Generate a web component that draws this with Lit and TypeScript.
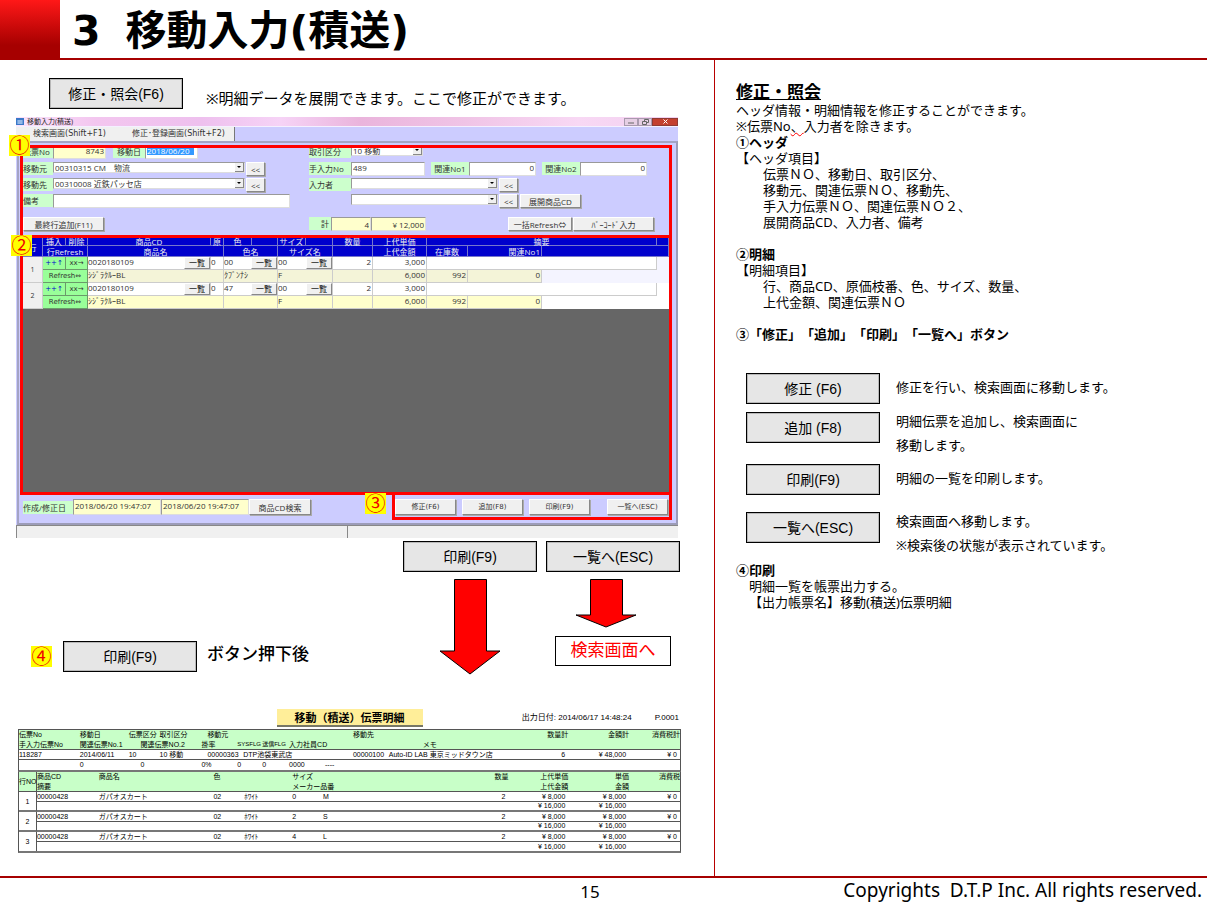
import { LitElement, html, css, nothing } from "lit";
import { customElement, property } from "lit/decorators.js";

type Cell = [start: number, end: number, text: string, align?: string];
interface ReportRow {
  cells: Cell[];
  kind?: string;
}

/** Column edges of the slip header block, in report units. */
const SLIP_EDGES = [18, 79, 128, 140, 159, 201, 207, 237, 243, 262, 289, 325, 353, 389, 423, 500, 569, 630, 681];
const SLIP_ROWS: ReportRow[] = [
  {
    kind: "green",
    cells: [[0, 1, "伝票No"], [1, 2, "移動日"], [2, 4, "伝票区分"], [4, 6, "取引区分"], [6, 9, "移動元"], [12, 14, "移動先"], [15, 16, "数量計", "right"], [16, 17, "金額計", "right"], [17, 18, "消費税計", "right"]],
  },
  {
    kind: "green end",
    cells: [[0, 1, "手入力伝票No"], [1, 3, "関連伝票No.1"], [3, 5, "関連伝票NO.2"], [5, 7, "掛率"], [7, 9, "SYSFLG", "flag"], [9, 10, "送信FLG", "flag"], [10, 12, "入力社員CD"], [14, 15, "メモ"]],
  },
  {
    kind: "end",
    cells: [[0, 1, "118287"], [1, 2, "2014/06/11"], [2, 4, "10"], [4, 6, "10 移動"], [6, 8, "00000363"], [8, 12, "DTP池袋東武店"], [12, 13, "00000100"], [13, 15, "Auto-ID LAB 東京ミッドタウン店"], [15, 16, "6", "num"], [16, 17, "¥ 48,000", "num"], [17, 18, "¥ 0", "num"]],
  },
  {
    cells: [[1, 3, "0"], [3, 5, "0"], [5, 7, "0%"], [7, 9, "0"], [9, 10, "0"], [10, 11, "0000"], [11, 12, "----"]],
  },
];

const ITEM_EDGES = [18, 36, 98, 213, 244, 292, 323, 440, 509, 569, 630, 681];
const ITEMS = [
  { no: "1", size: "0", label: "M" },
  { no: "2", size: "2", label: "S" },
  { no: "3", size: "4", label: "L" },
];

@customElement("report-table")
class ReportTable extends LitElement {
  @property({ attribute: false }) edges: number[] = [];
  @property({ attribute: false }) rows: ReportRow[] = [];

  static styles = css`
    :host { display: block; }
    table { width: 100%; table-layout: fixed; border-collapse: separate; border-spacing: 0; border: 1px solid #555; border-top: 0; border-bottom: 2px solid #777; }
    td { height: 9px; padding: 0; line-height: 9px; white-space: nowrap; overflow: visible; border-bottom: 1px solid transparent; }
    .green td { background: #c8ffc8; }
    .end td { border-bottom-color: #555; }
    .right { text-align: right; }
    .num { text-align: right; padding-right: 3px; }
    .flag { font-size: 6px; }
    .group { text-align: center; border-right: 1px solid #555; border-bottom-color: #555; }
    .double td { border-bottom: 2px solid #777; height: 8px; line-height: 8px; }
    .group.thick { border-bottom: 2px solid #777; }
    .last td, .group.final { border-bottom: 0; }
  `;

  private row(row: ReportRow) {
    const out: unknown[] = [];
    let at = row.kind?.includes("under") ? 1 : 0;
    for (const [start, end, text, align] of row.cells) {
      if (start > at) out.push(html`<td colspan=${start - at}></td>`);
      out.push(
        align?.startsWith("group")
          ? html`<td class=${align} rowspan="2">${text}</td>`
          : html`<td class=${align ?? ""} colspan=${end - start}>${text}</td>`
      );
      at = end;
    }
    const last = this.edges.length - 1;
    if (at < last) out.push(html`<td colspan=${last - at}></td>`);
    return html`<tr class=${row.kind ?? ""}>${out}</tr>`;
  }

  render() {
    const e = this.edges;
    const total = e[e.length - 1] - e[0];
    return html`<table>
      <colgroup>
        ${e.slice(1).map((x, i) => html`<col style="width:${((x - e[i]) / total) * 100}%" />`)}
      </colgroup>
      <tbody>${this.rows.map((r) => this.row(r))}</tbody>
    </table>`;
  }
}

const ITEM_ROWS: ReportRow[] = [
  {
    kind: "green",
    cells: [[0, 1, "行NO", "group"], [1, 2, "商品CD"], [2, 3, "商品名"], [3, 4, "色"], [5, 7, "サイズ"], [7, 8, "数量", "right"], [8, 9, "上代単価", "right"], [9, 10, "単価", "right"], [10, 11, "消費税", "right"]],
  },
  {
    kind: "green end under",
    cells: [[1, 2, "摘要"], [5, 7, "メーカー品番"], [8, 9, "上代金額", "right"], [9, 10, "金額", "right"]],
  },
  ...ITEMS.flatMap((it, i): ReportRow[] => {
    const last = i === ITEMS.length - 1;
    return [
      {
        kind: "end",
        cells: [[0, 1, it.no, last ? "group final" : "group thick"], [1, 2, "00000428"], [2, 3, "ガパオスカート"], [3, 4, "02"], [4, 5, "ﾎﾜｲﾄ"], [5, 6, it.size], [6, 7, it.label], [7, 8, "2", "num"], [8, 9, "¥ 8,000", "num"], [9, 10, "¥ 8,000", "num"], [10, 11, "¥ 0", "num"]],
      },
      {
        kind: last ? "under last" : "under double",
        cells: [[8, 9, "¥ 16,000", "num"], [9, 10, "¥ 16,000", "num"]],
      },
    ];
  }),
];

@customElement("entry-window")
class EntryWindow extends LitElement {
  static styles = css`
    :host { display: block; position: relative; font: 8px/10px "Open Sans", "Noto Sans CJK JP", sans-serif; color: #333; }
    button, input, select { font: inherit; color: inherit; box-sizing: border-box; margin: 0; padding: 0; border-radius: 0; appearance: none; min-width: 0; }
    .titlebar { display: flex; align-items: center; height: 9px; font-size: 7px; color: #222; background: linear-gradient(90deg, #fbe3fb, #f3c6ef 12%, #eec0ee 28%, #f6d3f6 40%, #eab4dc 52%, #f0c4e6 68%, #f8d8f4 85%, #f2d0f0); border-bottom: 1px solid #f4f0ff; }
    .app-icon { width: 8px; height: 7px; margin-right: 3px; }
    .caption { flex: 1; }
    .controls { display: flex; }
    .controls button { width: 14px; height: 8px; border: 1px solid #a99aae; background: #e6cfe4; display: flex; align-items: center; justify-content: center; }
    .controls .close { width: 26px; background: #c4402f; border-color: #8f3a34; color: #fff; }
    .body { background: #ccccff; }
    .tabs { display: flex; height: 14px; font-family: "DejaVu Sans", "Noto Sans CJK JP", sans-serif; }
    .tab { height: 14px; border: 0; background: #f0f0f0; width: 107px; }
    .tab.current { width: 112px; border-right: 1px solid #777; }
    .panel { margin: 0 0 0 1px; border: 2px solid #9c9cb8; border-color: #a4a4c4 #9c9cb8 #9c9cb8 #a4a4c4; padding: 2px 4px 3px 1px; }
    .frame { border: 3px solid #f00; }

    .head { height: 87px; overflow: hidden; display: grid; grid-template-columns: minmax(0, 286fr) minmax(0, 360fr); }
    .line { display: flex; align-items: flex-start; height: 16px; }
    .line.first { height: 17px; margin-top: -3px; }
    .line.tall { height: 23px; }
    .tag { background: #ccffcc; height: 13px; line-height: 13px; width: 30px; white-space: nowrap; }
    .tag.wide { width: 42px; }
    .tag.blank { background: none; }
    .tag.date { width: 32px; text-align: center; margin-left: 7px; }
    .tag.ref { width: 38px; margin-left: 6px; text-align: center; }
    .tag.sum { width: 22px; text-align: right; padding-right: 2px; box-sizing: border-box; }
    .field { height: 14px; border: 1px solid #999; border-right-color: #ddd; border-bottom-color: #ddd; background: #fff; padding: 0 1px 4px; }
    .field.num { text-align: right; }
    .field.pale { background: #ffffcc; }
    .field.even { padding-bottom: 0; }
    .w53 { width: 53px; } .w40 { width: 40px; } .w55 { width: 55px; } .w68 { width: 67px; } .w74 { width: 74px; } .w88 { width: 88px; }
    .note { width: 237px; }
    .field.marked { background: linear-gradient(#3399ff, #3399ff) 1px 0 / 47px 9px no-repeat #fff; color: #fff; }
    .drop { display: flex; height: 11px; border: 1px solid #999; border-right-color: #ddd; border-bottom-color: #ddd; background: #fff; box-sizing: border-box; }
    .drop select { flex: 1; border: 0; background: transparent; height: 9px; line-height: 9px; padding-left: 1px; }
    .arrow { width: 8px; background: #f0f0f0; display: flex; align-items: center; justify-content: center; border-right: 1px solid #888; border-bottom: 1px solid #888; }
    .arrow::after { content: ""; border: 2px solid transparent; border-top-color: #000; border-bottom: 0; }
    .w72 { width: 72px; } .w147 { width: 147px; } .w192 { width: 192px; }
    .btn { height: 14px; border: 1px solid #fff; border-right-color: #888; border-bottom-color: #888; background: #f0f0f0; white-space: nowrap; box-shadow: 1px 1px 0 #aaa; line-height: 11px; display: flex; justify-content: center; align-items: center; }
    .more { width: 19px; margin-left: 1px; }
    .add { width: 81px; } .cd { width: 61px; margin-left: 2px; } .bulk { width: 64px; } .code { width: 81px; margin: 0 15px 0 1px; }
    .spacer { flex: 1; }

    .detail { border-top: 0; background: #666; height: 254px; }
    table { width: 100%; table-layout: fixed; border-collapse: separate; border-spacing: 0; }
    th, td { padding: 0; height: 12px; line-height: 12px; border-right: 1px solid #ccc; border-bottom: 1px solid #ccc; white-space: nowrap; font-weight: 400; text-align: left; box-sizing: border-box; }
    th { background: #0000cc; color: #eee; border-color: #7777cc; text-align: center; height: 11px; line-height: 9px; }
    th.top { height: 8px; line-height: 7px; }
    td { height: 13px; line-height: 10px; vertical-align: top; background: #fff; }
    .num { text-align: right; padding-right: 1px; }
    .low td { background: #ffffcc; }
    .low.dim td { background: #f4f4d8; }
    .low td.rest, td.rest { background: #fff; border-color: transparent; }
    .low.dim td.rest, td.rest.dim { background: #f4f4ff; }
    td.index, .low td.index { background: #f0f0f0; text-align: center; vertical-align: middle; font-size: 7px; }
    td.op { padding: 0; border-color: #6a9a6a; }
    .op button { width: 100%; height: 12px; border: 0; background: #99ff99; display: block; font: 7px/12px "DejaVu Sans", sans-serif; }
    .op .ins { color: #0000cc; }
    .pick { display: flex; justify-content: space-between; align-items: flex-start; }
    .pick button { width: 26px; height: 12px; border: 1px solid #fff; border-right-color: #888; border-bottom-color: #888; background: #f0f0f0; line-height: 10px; color: #000; }

    .foot { display: flex; height: 25px; }
    .made { flex: 1; display: flex; align-items: flex-start; padding: 4px 0 0 3px; }
    .made .tag { width: 50px; margin-top: 2px; }
    .made .field { height: 16px; }
    .made .btn { width: 62px; height: 16px; }
    .actions { border-top: 0; box-sizing: border-box; width: 280px; height: 25px; display: flex; align-items: flex-start; gap: 6px; padding: 4px 1px 0 0; font-size: 7px; }
    .actions .btn { width: 61px; height: 16px; font-family: "DejaVu Sans", "Noto Sans CJK JP", sans-serif; }
    .actions .btn:last-child { margin-left: auto; }
    .status { height: 13px; box-sizing: border-box; display: grid; grid-template-columns: 331fr 331fr; background: #f0f0f0; border-top: 1px solid #888; }
    .status span { border-left: 1px solid #888; }
    .badge { position: absolute; width: 21px; height: 21px; background: #ff0; color: #e00; font: 20px/20px "Noto Sans CJK JP", sans-serif; text-align: center; }
    .b1 { left: -7px; top: 18px; } .b2 { left: -5px; top: 118px; } .b3 { left: 349px; top: 376px; }
  `;

  private drop(id: string, width: string, value: string, label?: string) {
    return html`<span class="drop ${width}">
      <select id=${id} aria-label=${label ?? nothing}><option>${value}</option></select><span class="arrow"></span>
    </span>`;
  }

  private entry(n: number, color: string, colorName: string, dim: boolean) {
    const tone = dim ? "dim" : "";
    const pick = (v: string) => html`<div class="pick"><span>${v}</span><button>一覧</button></div>`;
    return html`
      <tr>
        <td class="index" rowspan="2">${n}</td>
        <td class="op"><button class="ins" aria-label="挿入">++↑</button></td>
        <td class="op"><button aria-label="削除">xx→</button></td>
        <td>${pick("0020180109")}</td>
        <td>0</td>
        <td colspan="2">${pick(color)}</td>
        <td colspan="2">${pick("00")}</td>
        <td class="num">2</td>
        <td class="num">3,000</td>
        <td colspan="3"></td>
        <td class="rest ${tone}"></td>
      </tr>
      <tr class="low ${tone}">
        <td class="op" colspan="2"><button>Refresh⇔</button></td>
        <td colspan="2">ｼｼﾞﾗｸﾙｰBL</td>
        <td colspan="2">${colorName}</td>
        <td colspan="2">F</td>
        <td></td>
        <td class="num">6,000</td>
        <td class="num">992</td>
        <td class="num">0</td>
        <td class="rest" colspan="2"></td>
      </tr>`;
  }

  render() {
    const cols = [20, 23, 22, 123, 13, 28, 26, 28, 27, 40, 54, 41, 74, 115, 12];
    const top = (t: string, span = 1) => html`<th class="top" colspan=${span}>${t}</th>`;
    return html`
      <div class="titlebar">
        <svg class="app-icon" viewBox="0 0 8 7"><rect width="8" height="7" fill="#3a78c8" /><path d="M1 3h6M1 5h6M3 2v4M5 2v4" stroke="#d6e8ff" stroke-width=".7" /></svg>
        <span class="caption">移動入力(積送)</span>
        <div class="controls">
          <button aria-label="最小化"><svg width="6" height="4"><path d="M0 3h6" stroke="#666" /></svg></button>
          <button aria-label="最大化"><svg width="7" height="6" fill="none" stroke="#666"><path d="M.5 2.500h4v3h-4zM2.500 2V.5h4v3H5" /></svg></button>
          <button class="close" aria-label="閉じる"><svg width="5" height="5" stroke="#fff"><path d="M.5.5l4 4M4.500.5l-4 4" /></svg></button>
        </div>
      </div>
      <div class="body">
        <div class="tabs">
          <button class="tab">検索画面(Shift+F1)</button>
          <button class="tab current">修正･登録画面(Shift+F2)</button>
        </div>
        <div class="panel">
          <section class="frame head">
            <div>
              <div class="line first">
                <label class="tag" for="slip">伝票No</label>
                <input id="slip" class="field pale num w53" value="8743" />
                <label class="tag date" for="day">移動日</label>
                <input id="day" class="field marked w53" value="2018/06/20" />
              </div>
              <div class="line">
                <label class="tag" for="from">移動元</label>${this.drop("from", "w192", "00310315 CM　物流")}
                <button class="btn more">&lt;&lt;</button>
              </div>
              <div class="line">
                <label class="tag" for="to">移動先</label>${this.drop("to", "w192", "00310008 近鉄パッセ店")}
                <button class="btn more">&lt;&lt;</button>
              </div>
              <div class="line tall">
                <label class="tag" for="memo">備考</label><input id="memo" class="field note" />
              </div>
              <div class="line"><button class="btn add">最終行追加(F11)</button></div>
            </div>
            <div>
              <div class="line first">
                <label class="tag wide" for="kind">取引区分</label>${this.drop("kind", "w72", "10 移動")}
              </div>
              <div class="line">
                <label class="tag wide" for="manual">手入力No</label><input id="manual" class="field w74" value="489" />
                <label class="tag ref" for="ref1">関連No1</label><input id="ref1" class="field num w68" value="0" />
                <label class="tag ref" for="ref2">関連No2</label><input id="ref2" class="field num w68" value="0" />
              </div>
              <div class="line">
                <label class="tag wide" for="person">入力者</label>${this.drop("person", "w147", "")}
                <button class="btn more">&lt;&lt;</button>
              </div>
              <div class="line tall">
                <span class="tag wide blank"></span>${this.drop("open", "w147", "", "展開商品CD")}
                <button class="btn more">&lt;&lt;</button><button class="btn cd">展開商品CD</button>
              </div>
              <div class="line">
                <label class="tag sum" for="count">計</label>
                <input id="count" class="field pale num even w40" value="4" />
                <input class="field pale num even w55" aria-label="合計金額" value="¥ 12,000" />
                <span class="spacer"></span>
                <button class="btn bulk">一括Refresh⇔</button><button class="btn code">ﾊﾞｰｺｰﾄﾞ入力</button>
              </div>
            </div>
          </section>
          <section class="frame detail">
            <table>
              <colgroup>${cols.map((w) => html`<col style="width:${(w / 646) * 100}%" />`)}</colgroup>
              <thead>
                <tr>
                  <th rowspan="2">行</th>
                  ${top("挿入")}${top("削除")}${top("商品CD")}${top("原")}${top("色")}${top("")}${top("サイズ")}${top("")}${top("数量")}${top("上代単価")}${top("摘要", 3)}${top("")}
                </tr>
                <tr>
                  <th colspan="2">行Refresh</th>
                  <th colspan="2">商品名</th>
                  <th colspan="2">色名</th>
                  <th colspan="2">サイズ名</th>
                  <th></th>
                  <th>上代金額</th>
                  <th>在庫数</th>
                  <th class="num">関連No1</th>
                  <th colspan="2"></th>
                </tr>
              </thead>
              <tbody>
                ${this.entry(1, "00", "ｸﾌﾞﾝﾅｼ", true)}${this.entry(2, "47", "", false)}
              </tbody>
            </table>
          </section>
          <div class="foot">
            <div class="made">
              <label class="tag" for="made">作成/修正日</label>
              <input id="made" class="field pale w88" value="2018/06/20 19:47:07" />
              <input class="field pale w88" aria-label="修正日" value="2018/06/20 19:47:07" />
              <button class="btn">商品CD検索</button>
            </div>
            <div class="frame actions">
              <button class="btn">修正(F6)</button><button class="btn">追加(F8)</button>
              <button class="btn">印刷(F9)</button><button class="btn">一覧へ(ESC)</button>
            </div>
          </div>
        </div>
      </div>
      <div class="status"><span></span><span></span></div>
      <span class="badge b1">①</span><span class="badge b2">②</span><span class="badge b3">③</span>
    `;
  }
}

@customElement("app-root")
class AppRoot extends LitElement {
  static styles = css`
    :host { display: flex; flex-direction: column; min-height: 100vh; background: #fff; color: #000; font: 13px/16px "Noto Sans", "Noto Sans CJK JP", sans-serif; text-spacing-trim: space-all; }
    header { display: flex; align-items: center; height: 58px; border-bottom: 2px solid #a60000; }
    .block { width: 60px; height: 60px; background: linear-gradient(#ff1818, #a60000 75%); margin-bottom: -2px; align-self: flex-start; }
    h1 { margin: 0 0 0 12px; padding-top: 4px; font: bold 41px/54px "DejaVu Sans", "Noto Sans CJK JP", sans-serif; display: flex; gap: 25px; }
    main { flex: 1; display: grid; grid-template-columns: minmax(0, 714fr) minmax(0, 493fr); }
    .shots { padding: 18px 33px 0 16px; }
    .notes { border-left: 1px solid #b80000; padding: 22px 21px 0; }
    .key { box-sizing: border-box; width: 134px; height: 31px; padding: 0; border: 1px solid #000; outline: 1px solid #0003; outline-offset: -2px; background: #e6e6e6; border-radius: 0; color: #000; font: 14px/16px "Liberation Sans", "Noto Sans CJK JP", sans-serif; flex: none; }
    .intro { display: flex; align-items: center; gap: 23px; margin-left: 33px; height: 31px; font-size: 15px; }
    .intro span { padding-top: 9px; }
    entry-window { margin: 8px 3px 3px 0; }
    .flow { display: grid; grid-template-columns: 1fr 134px 134px; column-gap: 9px; padding-right: 1px; }
    .path { display: flex; flex-direction: column; align-items: center; }
    .path svg { margin-top: 7px; display: block; }
    .path.back svg { margin-right: 14px; }
    .result { margin-top: 8px; border: 1px solid #000; box-sizing: border-box; width: 116px; height: 30px; text-align: center; font-size: 17px; line-height: 26px; color: #f00; }
    .after { display: flex; align-items: center; align-self: end; margin: 0 0 3px 15px; font-size: 17px; }
    .badge { width: 21px; height: 21px; background: #ff0; color: #e00; font: 20px/20px "Noto Sans CJK JP", sans-serif; text-align: center; margin-right: 11px; }
    .after .said { padding: 0 0 5px 10px; font-weight: 500; }
    .report { margin: 34px 0 0 2px; font: 7px/9px "Liberation Sans Narrow", "Liberation Sans", "Noto Sans CJK JP", sans-serif; }
    .report-head { display: grid; grid-template-columns: 1fr 146px 1fr; height: 21px; border-bottom: 1px solid #555; box-sizing: border-box; }
    .report-title { margin: 0; height: 16px; background: #ffee99; border-bottom: 2px solid #776; font: bold 11px/17px "Noto Sans CJK JP", sans-serif; text-align: center; }
    .issued { display: flex; justify-content: flex-end; gap: 23px; padding: 4px 2px 0 0; font-family: "Liberation Sans", "Noto Sans CJK JP", sans-serif; font-size: 8px; }
    h2 { margin: 0; font-size: 17px; line-height: 20px; text-decoration: underline; text-underline-offset: 1px; }
    h3 { margin: 0; font: inherit; font-weight: 700; }
    p { margin: 0; }
    .in2 { padding-left: 27px; }
    .in1 { padding-left: 13px; }
    .part { margin-bottom: 16px; }
    .typo { text-decoration: underline wavy #f00 1px; }
    .guide { display: grid; grid-template-columns: 134px 1fr; grid-template-rows: 39px 52px 48px 50px; align-items: start; column-gap: 16px; padding: 15px 0 0 10px; line-height: 24px; }
    .guide p { line-height: 29px; }
    .guide p.two { line-height: 24px; margin-top: -3px; }
    footer { display: grid; grid-template-columns: 1fr auto 1fr; border-top: 2px solid #a60000; height: 24px; font-size: 17px; line-height: 22px; }
    .page { grid-column: 2; line-height: 27px; padding-right: 27px; }
    .copy { text-align: right; padding-right: 5px; white-space: pre; font-size: 19px; line-height: 24px; }
  `;

  private arrow(height: number, neck: number) {
    return html`<svg width="62" height=${height} viewBox="0 0 62 ${height}">
      <path d="M15.500 .5H47.500V${neck}H61L31 ${height - 1}L1 ${neck}H15.500Z" fill="#f00" stroke="#000" />
    </svg>`;
  }

  render() {
    return html`
      <header>
        <div class="block"></div>
        <h1><span>3</span><span>移動入力(積送)</span></h1>
      </header>
      <main>
        <div class="shots">
          <div class="intro">
            <button class="key">修正・照会(F6)</button>
            <span>※明細データを展開できます。ここで修正ができます。</span>
          </div>
          <entry-window></entry-window>
          <div class="flow">
            <div class="after">
              <span class="badge">④</span><button class="key">印刷(F9)</button><span class="said">ボタン押下後</span>
            </div>
            <div class="path"><button class="key">印刷(F9)</button>${this.arrow(96, 72)}</div>
            <div class="path back">
              <button class="key">一覧へ(ESC)</button>${this.arrow(49, 36)}
              <div class="result">検索画面へ</div>
            </div>
          </div>
          <div class="report">
            <div class="report-head">
              <span></span>
              <h4 class="report-title">移動（積送）伝票明細</h4>
              <div class="issued"><span>出力日付: 2014/06/17 14:48:24</span><span>P.0001</span></div>
            </div>
            <report-table .edges=${SLIP_EDGES} .rows=${SLIP_ROWS}></report-table>
            <report-table .edges=${ITEM_EDGES} .rows=${ITEM_ROWS}></report-table>
          </div>
        </div>
        <aside class="notes">
          <h2>修正・照会</h2>
          <p>ヘッダ情報・明細情報を修正することができます。</p>
          <p>※伝票No<span class="typo">、</span>入力者を除きます。</p>
          <h3>①ヘッダ</h3>
          <p>【ヘッダ項目】</p>
          <p class="in2 part">伝票ＮＯ、移動日、取引区分、<br />移動元、関連伝票ＮＯ、移動先、<br />手入力伝票ＮＯ、関連伝票ＮＯ２、<br />展開商品CD、入力者、備考</p>
          <h3>②明細</h3>
          <p>【明細項目】</p>
          <p class="in2 part">行、商品CD、原価枝番、色、サイズ、数量、<br />上代金額、関連伝票ＮＯ</p>
          <h3 class="part">③「修正」「追加」「印刷」「一覧へ」ボタン</h3>
          <div class="guide">
            <button class="key">修正 (F6)</button><p>修正を行い、検索画面に移動します。</p>
            <button class="key">追加 (F8)</button><p class="two">明細伝票を追加し、検索画面に<br />移動します。</p>
            <button class="key">印刷(F9)</button><p>明細の一覧を印刷します。</p>
            <button class="key">一覧へ(ESC)</button><p class="two">検索画面へ移動します。<br />※検索後の状態が表示されています。</p>
          </div>
          <h3>④印刷</h3>
          <p class="in1">明細一覧を帳票出力する。<br />【出力帳票名】移動(積送)伝票明細</p>
        </aside>
      </main>
      <footer>
        <span class="page">15</span>
        <span class="copy">Copyrights  D.T.P Inc. All rights reserved.</span>
      </footer>
    `;
  }
}
